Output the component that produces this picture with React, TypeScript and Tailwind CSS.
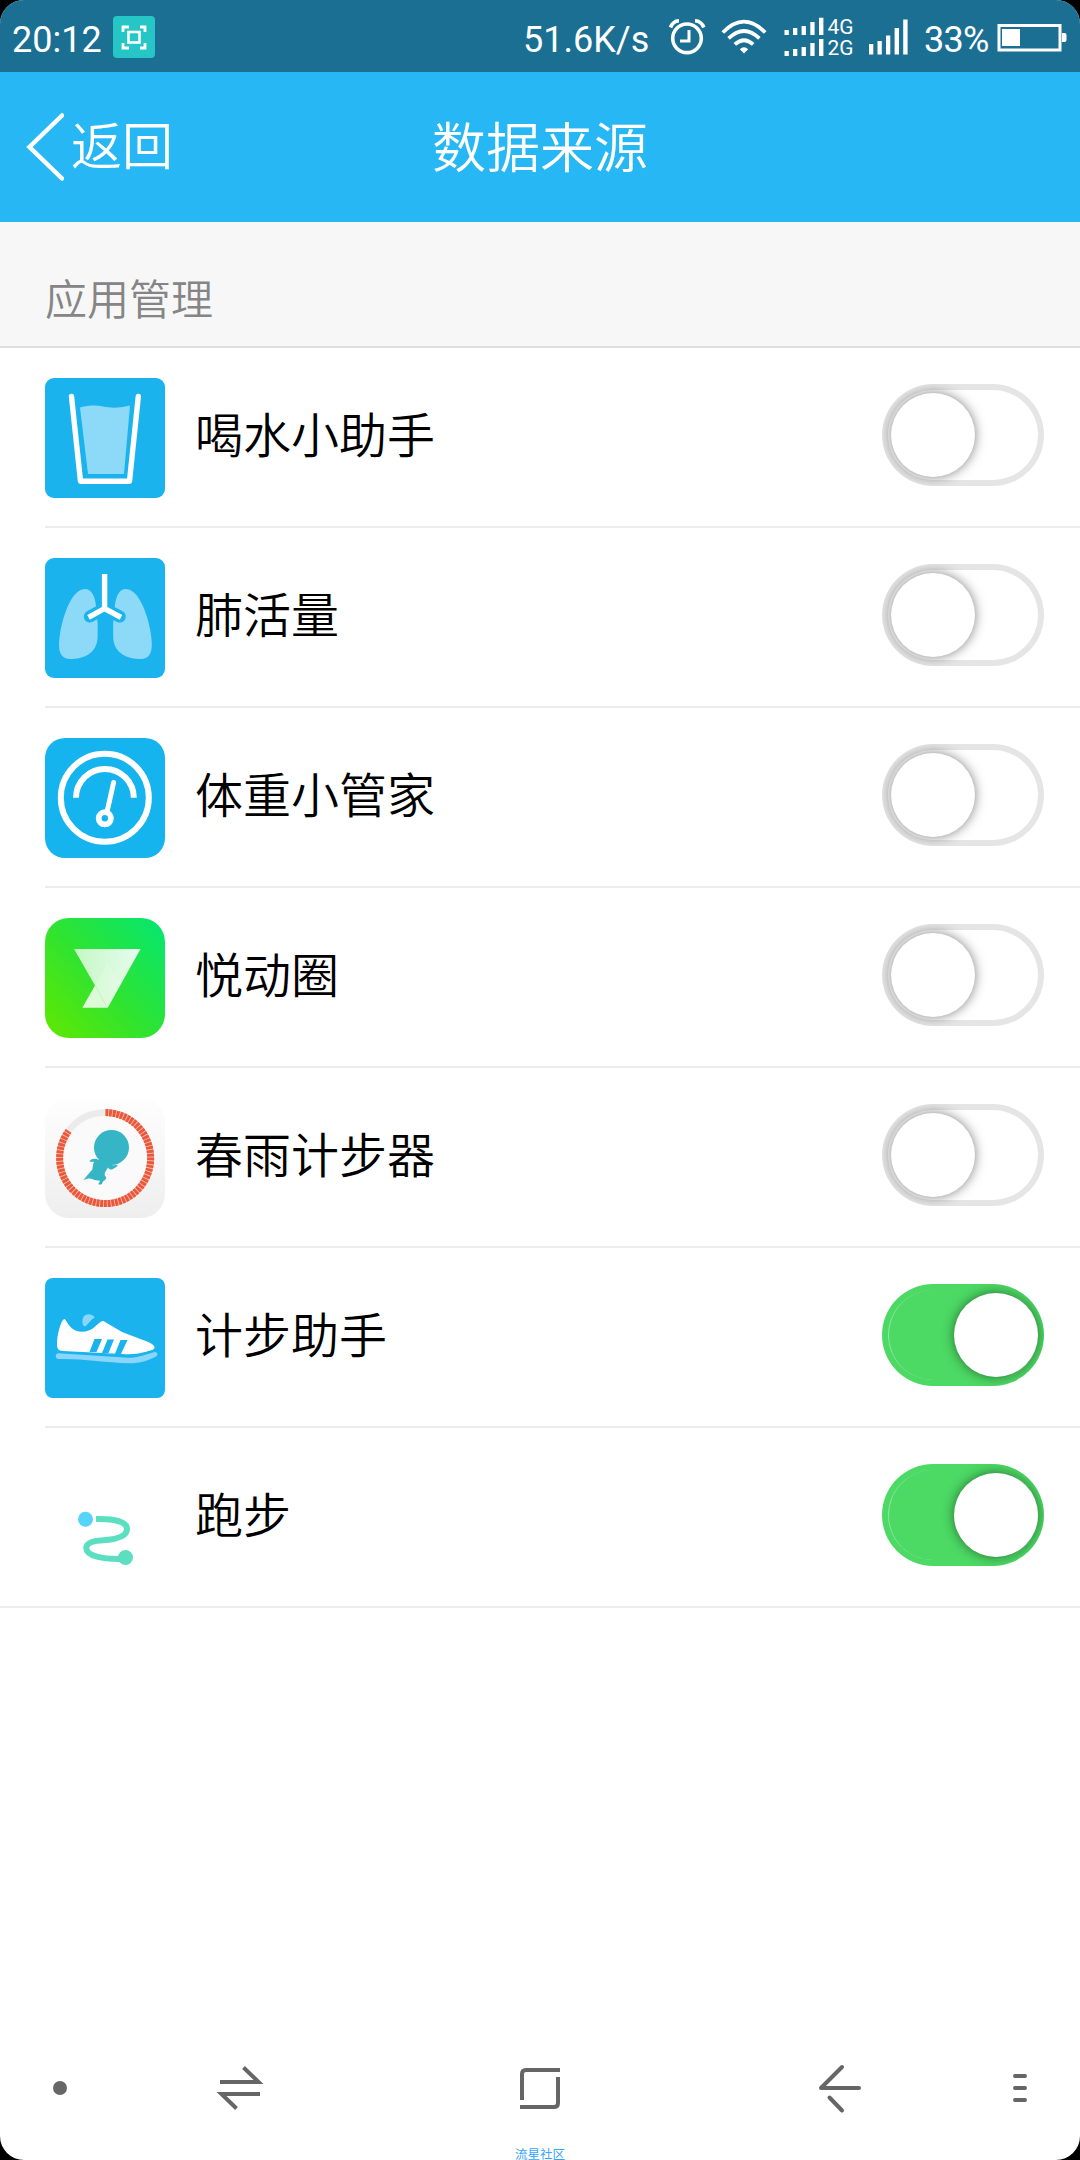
import React, { useState } from 'react';

interface AppSource {
  id: string;
  name: string;
  icon: React.ReactNode;
  enabled: boolean;
}

function WaterIcon() {
  return (
    <svg viewBox="0 0 120 120" className="w-[120px] h-[120px]">
      <rect width="120" height="120" rx="9" fill="#1bb3ed" />
      <path d="M35 29.5C45 27 50 27 58 28.5S72 30.5 85 27.5L79 96H43Z" fill="#8dd9f8" />
      <path d="M26.5 18.5L35.5 103.2H84.5L93.3 18.5" fill="none" stroke="#fff" strokeWidth="5.4" strokeLinecap="round" strokeLinejoin="round" />
    </svg>
  );
}

function LungIcon() {
  const lung = 'M40 31C47 31 50 39 51 48L52.6 65V78C52.6 96 38 101 25 101C17 101 14 95 14 87C14 70 24 31 40 31Z';
  return (
    <svg viewBox="0 0 120 120" className="w-[120px] h-[120px]">
      <rect width="120" height="120" rx="9" fill="#1bb3ed" />
      <g fill="#8dd9f8">
        <path d={lung} />
        <path d={lung} transform="translate(120.8 0) scale(-1 1)" />
      </g>
      <path d="M44.8 58.6L59.6 50.5L74.8 58.6" fill="none" stroke="#1bb3ed" strokeWidth="12" strokeLinecap="round" />
      <path d="M59.6 16V50.5M43.5 59.3L59.6 50.5L76 59.3" fill="none" stroke="#fff" strokeWidth="5.4" />
    </svg>
  );
}

function GaugeIcon() {
  return (
    <svg viewBox="0 0 120 120" className="w-[120px] h-[120px]">
      <rect width="120" height="120" rx="20" fill="#15b4ef" />
      <g fill="none" stroke="#fff">
        <circle cx="59.8" cy="59.8" r="44" strokeWidth="6" />
        <path d="M31 59.8a28.9 28.9 0 0 1 57.8 0" strokeWidth="6" />
        <path d="M68.6 44.5L62 74" strokeWidth="5" strokeLinecap="round" />
        <circle cx="59.8" cy="80.3" r="6.1" strokeWidth="5.8" />
      </g>
    </svg>
  );
}

function YuedongIcon() {
  return (
    <svg viewBox="0 0 120 120" className="w-[120px] h-[120px]">
      <defs>
        <linearGradient id="yd-bg" x1="0" y1="1" x2="1" y2="0.1">
          <stop offset="0" stopColor="#62e800" />
          <stop offset="0.5" stopColor="#2fe331" />
          <stop offset="1" stopColor="#08e66c" />
        </linearGradient>
        <linearGradient id="yd-mark" x1="0" y1="0" x2="1" y2="0">
          <stop offset="0" stopColor="#fff" stopOpacity="0.72" />
          <stop offset="1" stopColor="#fff" stopOpacity="0.9" />
        </linearGradient>
      </defs>
      <rect width="120" height="120" rx="24" fill="url(#yd-bg)" />
      <path d="M29 31H95.5L62.7 89.7L50 67.5Z" fill="url(#yd-mark)" />
      <path d="M50 67.5L62.7 89.7H37.3Z" fill="#fff" fillOpacity="0.82" />
      <path d="M50 67.5L62 46L76 66L62.7 89.7Z" fill="#fff" fillOpacity="0.15" />
    </svg>
  );
}

function ChunyuIcon() {
  const arc = 'M60.5 14.6A45.5 45.5 0 1 1 23.6 33';
  return (
    <svg viewBox="0 0 120 120" className="w-[120px] h-[120px]">
      <defs>
        <linearGradient id="cy-bg" x1="0" y1="0" x2="0" y2="1">
          <stop offset="0" stopColor="#fefefe" />
          <stop offset="1" stopColor="#efeeee" />
        </linearGradient>
      </defs>
      <rect width="120" height="120" rx="24" fill="url(#cy-bg)" />
      <circle cx="60" cy="60" r="45.5" fill="#fafafa" stroke="#ebebeb" strokeWidth="6.5" />
      <path d={arc} fill="none" stroke="#fbb9a2" strokeWidth="7" />
      <path d={arc} fill="none" stroke="#e9573c" strokeWidth="7" strokeDasharray="2.8 0.9" />
      <circle cx="66.5" cy="49.5" r="17.5" fill="#35b5c6" />
      <path
        d="M52 57L54 62C50 60 46 60 44.3 63.5C46 64.5 47.5 63 49 64C47.5 67 48 69 47.3 71.5L38 82.5C42 80.5 45 80 47.8 81.2C50 82.5 53 82 55 82.8C55 84.5 53 85 53.5 86.5C55.5 86.8 57 86.5 57.5 84.5C58 82.5 61 82.5 61.3 79.5C60 77.5 59 77 60 74.5L63 69.5C64.5 72 67 72 68.8 70.5C70.5 69.5 72.3 69 72.8 67.3C70.5 66 67 68.5 65 66Z"
        fill="#35b5c6"
      />
    </svg>
  );
}

function ShoeIcon() {
  return (
    <svg viewBox="0 0 120 120" className="w-[120px] h-[120px]">
      <rect width="120" height="120" rx="8" fill="#1bb3ed" />
      <path d="M37.5 45C37 39 40 36.3 43.5 36.3C46 36.3 48 37.5 49.8 39.3C46.5 41.5 44 45 40.5 48.3C38.5 48.3 37.7 47 37.5 45Z" fill="#8ad6fb" />
      <path d="M18.8 41.2C20 40.4 20.5 42 21.5 43.5C25 49 29 53.7 37 53.7C47 53.7 51 47 56 43.5C58 42.3 59 43.2 60.5 44.2L77 54L102 63.5C107 65.5 109.5 67.5 109.5 69.5C109.5 71.5 106 72.5 102 73.5C95 75.5 88 76.8 77 76L18 73C13 72.7 12 70.5 12 66C12 57 15.5 43.5 18.8 41.2Z" fill="#fff" />
      <path d="M49.5 61H57L51.5 74H44.5ZM62.5 61.5H69L63.5 75H57ZM75.5 62H82.5L75.5 77H69.5Z" fill="#1bb3ed" />
      <path d="M13 75.3L83 79.8C93 79.8 102 76 110 74C113 74 113 77.5 111 78.5C103 82.5 95 85.3 84 85.3C60 84.5 38 80.5 13.5 81C10 81 10 75.3 13 75.3Z" fill="#8ad6fb" />
    </svg>
  );
}

function RunIcon() {
  return (
    <svg viewBox="0 0 120 120" className="w-[120px] h-[120px]">
      <circle cx="40.5" cy="61.3" r="7.5" fill="#56d3fb" />
      <path d="M51 61C70 60.5 82 64 82 71C82 79 69 81.5 58 82.3C48 82.8 41.3 84.5 41.3 90C41.3 98 58 101.5 77 101" fill="none" stroke="#5cdfc0" strokeWidth="6" />
      <circle cx="80.5" cy="99.5" r="7.5" fill="#5cdfc0" />
    </svg>
  );
}

const SOURCES: AppSource[] = [
  { id: 'water', name: '喝水小助手', icon: <WaterIcon />, enabled: false },
  { id: 'lung', name: '肺活量', icon: <LungIcon />, enabled: false },
  { id: 'weight', name: '体重小管家', icon: <GaugeIcon />, enabled: false },
  { id: 'yuedong', name: '悦动圈', icon: <YuedongIcon />, enabled: false },
  { id: 'chunyu', name: '春雨计步器', icon: <ChunyuIcon />, enabled: false },
  { id: 'steps', name: '计步助手', icon: <ShoeIcon />, enabled: true },
  { id: 'run', name: '跑步', icon: <RunIcon />, enabled: true },
];

function StatusBar() {
  return (
    <div className="h-[72px] bg-[#1a6f93] flex items-center text-white font-['Roboto',sans-serif] font-normal text-[36px] leading-none">
      <span className="ml-3 w-[101px] pt-2">20:12</span>
      <svg viewBox="0 0 42 42" className="w-[42px] h-[42px] mt-0.5">
        <rect width="42" height="42" rx="4" fill="#26c6c6" />
        <path d="M10 16V11H16M27 11H32V16M32 27V32H27M16 32H10V27" fill="none" stroke="#fff" strokeWidth="2.8" />
        <rect x="15.5" y="16" width="11" height="10.5" fill="none" stroke="#fff" strokeWidth="2.6" />
      </svg>
      <span className="ml-auto pt-2 w-[145px]">51.6K/s</span>
      <svg viewBox="668 0 244 72" className="w-[244px] h-[72px]" fill="none" stroke="#fff">
        <circle cx="687" cy="38.3" r="14.3" strokeWidth="3.6" />
        <path d="M670.5 27.5C672 23.5 674.5 21 679 20.8M703.8 27.5C702.3 23.5 699.5 21 695 20.8" strokeWidth="3.6" />
        <path d="M689 30V41H680" strokeWidth="3" />
        <path d="M722.8 32.5Q744 10.8 765.2 32.5M728.6 38.4Q744 23.7 759.4 38.4M734.8 44.4Q744 36 753.2 44.4" strokeWidth="3.7" />
        <path d="M739.8 49.2Q744 45.5 748.2 49.2L744 53.6Z" fill="#fff" stroke="none" />
        <g fill="#fff" stroke="none">
          <path d="M784.5 30h4.300v5h-4.300zM793 28h4.300v7h-4.300zM801.6 26h4.300v9h-4.300zM810.3 22h4.300v13h-4.300zM819 17.8h4.400v17.2h-4.400z" />
          <path d="M784.5 51h4.300v5h-4.300zM793 49h4.300v7h-4.300zM801.6 47h4.300v9h-4.300zM810.3 43h4.300v13h-4.300zM819 39h4.400v17h-4.400z" />
          <path d="M869 44h4.300v10.500h-4.300zM877.5 41h4.300v13.500h-4.300zM886 35.5h4.300v19h-4.300zM894.6 28h4.400v26.500h-4.400zM903.2 19.5h4.400v35h-4.400z" />
          <text x="827.5" y="33.8" fontSize="20.5" textLength="26" lengthAdjust="spacingAndGlyphs">4G</text>
          <text x="827.5" y="55" fontSize="20.5" textLength="26" lengthAdjust="spacingAndGlyphs">2G</text>
        </g>
      </svg>
      <span className="ml-3 w-[73px] pt-2 tracking-[-0.7px]">33%</span>
      <svg viewBox="0 0 70 28" className="w-[70px] h-7 mr-[13px] mt-[3px]">
        <rect x="2" y="1.5" width="61" height="24.5" fill="none" stroke="#fff" strokeWidth="3" />
        <rect x="5" y="5" width="18" height="17" fill="#fff" />
        <path d="M65 9h2.5q2 0 2 2v5q0 2-2 2H65z" fill="#fff" />
      </svg>
    </div>
  );
}

function Switch({ checked, onChange }: { checked: boolean; onChange: () => void }) {
  return (
    <button
      type="button"
      role="switch"
      aria-checked={checked}
      onClick={onChange}
      className={`relative w-[162px] h-[102px] mb-1 rounded-full flex items-center overflow-hidden cursor-pointer ${
        checked ? 'bg-[#4cd964] justify-end pr-1.5' : 'bg-white justify-start pl-[9px] shadow-[inset_0_0_0_6px_#e5e5e5]'
      }`}
    >
      {checked && <span className="absolute inset-[6px] rounded-full border-x border-white/35" />}
      <span className="relative w-[84px] h-[84px] rounded-full bg-white shrink-0 shadow-[0_0_12px_rgba(0,0,0,0.5)]" />
    </button>
  );
}

function NavBar() {
  return (
    <div className="h-[144px] flex flex-col items-center overflow-hidden">
      <svg viewBox="0 0 1080 130" className="w-[1080px] h-[130px] shrink-0" fill="none" stroke="#666" strokeWidth="4">
        <circle cx="60" cy="72" r="7" fill="#666" stroke="none" />
        <path d="M220 66H258.5L243.5 51.5M260 78H221.5L236.5 92.5" />
        <path d="M522 84V58Q522 54 526 54H560M558 61V87Q558 91 554 91H520" />
        <path d="M859 72H821L842 51M829.5 81.5L842 94.5" strokeLinecap="round" strokeLinejoin="round" />
        <path d="M1015 60H1025M1015 72H1025M1015 84H1025" strokeLinecap="round" />
      </svg>
      <span className="text-[12.5px] leading-[15px] font-normal text-[#35a5ff]">流星社区</span>
    </div>
  );
}

export default function App() {
  const [sources, setSources] = useState(SOURCES);

  const toggle = (id: string) => {
    setSources((prev) => prev.map((s) => (s.id === id ? { ...s, enabled: !s.enabled } : s)));
  };

  return (
    <div className="w-[1080px] h-[2160px] bg-black">
      <div className="h-full bg-white rounded-[24px] overflow-hidden flex flex-col font-['Noto_Sans_CJK_SC',sans-serif] font-[350]">
        <StatusBar />

        <header className="h-[150px] bg-[#27b7f5] text-white grid grid-cols-3 items-center shrink-0">
          <button type="button" className="flex items-center pl-[26px] text-left cursor-pointer">
            <svg viewBox="0 0 38 68" className="w-[38px] h-[68px]" fill="none" stroke="#fff" strokeWidth="4.5">
              <path d="M36 2.5L3.5 34L36 65.5" strokeLinecap="round" />
            </svg>
            <span className="ml-[7px] mb-[9px] text-[51px] leading-[60px]">返回</span>
          </button>
          <h1 className="mb-[5px] text-[54px] leading-[60px] text-center font-[350]">数据来源</h1>
        </header>

        <div className="h-[126px] shrink-0 bg-[#f7f7f7] border-b-2 border-[#dedede] pl-[45px] pt-[45px] text-[42px] leading-[60px] text-[#858585]">
          应用管理
        </div>

        <ul className="shrink-0">
          {sources.map((source, i) => (
            <li key={source.id} className={i === sources.length - 1 ? 'border-b-2 border-[#ececec] pl-[45px]' : 'pl-[45px]'}>
              <div
                className={`flex items-center pr-9 ${
                  i === sources.length - 1 ? 'h-[178px]' : 'h-[180px] border-b-2 border-[#ececec]'
                }`}
              >
                <div className="mt-0.5 shrink-0">{source.icon}</div>
                <span className="ml-[30px] mb-[10px] flex-1 text-[48px] leading-[60px] text-black">{source.name}</span>
                <Switch checked={source.enabled} onChange={() => toggle(source.id)} />
              </div>
            </li>
          ))}
        </ul>

        <div className="flex-1" />
        <NavBar />
      </div>
    </div>
  );
}
